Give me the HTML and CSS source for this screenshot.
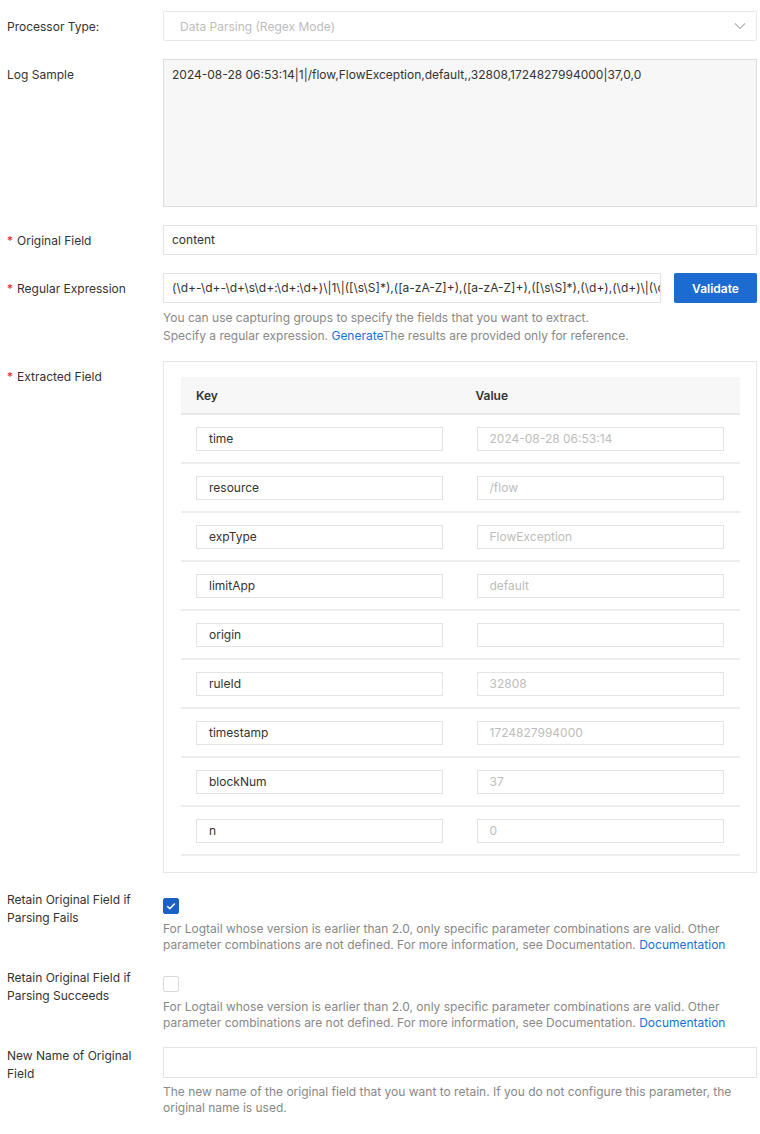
FILE: index.html
```html
<!DOCTYPE html>
<html>
<head>
<meta charset="utf-8">
<link rel="stylesheet" href="styles.css">
</head>
<body>
<div class="form">
  <div class="row">
    <div class="label">Processor Type:</div>
    <div class="control">
      <div class="select">
        <span>Data Parsing (Regex Mode)</span>
        <svg class="chev" width="12" height="8" viewBox="0 0 12 8"><path d="M1 1.5 L6 6.5 L11 1.5" fill="none" stroke="#b5b5b5" stroke-width="1.2"/></svg>
      </div>
    </div>
  </div>

  <div class="row">
    <div class="label">Log Sample</div>
    <div class="control">
      <div class="textarea">2024-08-28 06:53:14|1|/flow,FlowException,default,,32808,1724827994000|37,0,0</div>
    </div>
  </div>

  <div class="row">
    <div class="label"><span class="req">*</span>Original Field</div>
    <div class="control">
      <div class="input">content</div>
    </div>
  </div>

  <div class="row row-regex">
    <div class="label"><span class="req">*</span>Regular Expression</div>
    <div class="control">
      <div class="inline">
        <div class="input regex">(\d+-\d+-\d+\s\d+:\d+:\d+)\|1\|([\s\S]*),([a-zA-Z]+),([a-zA-Z]+),([\s\S]*),(\d+),(\d+)\|(\d</div>
        <button class="btn">Validate</button>
      </div>
      <div class="help tall">You can use capturing groups to specify the fields that you want to extract.<br>Specify a regular expression. <a class="link">Generate</a>The results are provided only for reference.</div>
    </div>
  </div>

  <div class="row">
    <div class="label"><span class="req">*</span>Extracted Field</div>
    <div class="control">
      <div class="panel">
        <table class="tbl">
          <thead>
            <tr><th>Key</th><th>Value</th></tr>
          </thead>
          <tbody>
            <tr><td><div class="cell key">time</div></td><td><div class="cell val">2024-08-28 06:53:14</div></td></tr>
            <tr><td><div class="cell key">resource</div></td><td><div class="cell val">/flow</div></td></tr>
            <tr><td><div class="cell key">expType</div></td><td><div class="cell val">FlowException</div></td></tr>
            <tr><td><div class="cell key">limitApp</div></td><td><div class="cell val">default</div></td></tr>
            <tr><td><div class="cell key">origin</div></td><td><div class="cell val"></div></td></tr>
            <tr><td><div class="cell key">ruleId</div></td><td><div class="cell val">32808</div></td></tr>
            <tr><td><div class="cell key">timestamp</div></td><td><div class="cell val">1724827994000</div></td></tr>
            <tr><td><div class="cell key">blockNum</div></td><td><div class="cell val">37</div></td></tr>
            <tr><td><div class="cell key">n</div></td><td><div class="cell val">0</div></td></tr>
          </tbody>
        </table>
      </div>
    </div>
  </div>

  <div class="row row-check">
    <div class="label multi">Retain Original Field if<br>Parsing Fails</div>
    <div class="control">
      <div class="checkwrap"><span class="checkbox checked"><svg width="10" height="8" viewBox="0 0 10 8"><path d="M1.2 4.2 L3.8 6.6 L8.8 1.4" fill="none" stroke="#fff" stroke-width="1.5"/></svg></span></div>
      <div class="help short">For Logtail whose version is earlier than 2.0, only specific parameter combinations are valid. Other<br>parameter combinations are not defined. For more information, see Documentation. <a class="link">Documentation</a></div>
    </div>
  </div>

  <div class="row row-check">
    <div class="label multi">Retain Original Field if<br>Parsing Succeeds</div>
    <div class="control">
      <div class="checkwrap"><span class="checkbox"></span></div>
      <div class="help short">For Logtail whose version is earlier than 2.0, only specific parameter combinations are valid. Other<br>parameter combinations are not defined. For more information, see Documentation. <a class="link">Documentation</a></div>
    </div>
  </div>

  <div class="row row-check">
    <div class="label multi">New Name of Original<br>Field</div>
    <div class="control">
      <div class="input empty"></div>
      <div class="help short newname">The new name of the original field that you want to retain. If you do not configure this parameter, the<br>original name is used.</div>
    </div>
  </div>
</div>
</body>
</html>
```

FILE: styles.css
```css
* { box-sizing: border-box; }
html, body { margin: 0; padding: 0; background: #fff; }
body {
  font-family: Inter, "Liberation Sans", Arial, sans-serif;
  font-size: 12px;
  color: #333;
}
.form { padding: 11px 3px 0 7px; }
.row {
  display: grid;
  grid-template-columns: 156px 594px;
  margin-bottom: 18px;
}
.row-regex { margin-bottom: 16px; }
.label {
  padding-top: 7px;
  line-height: 18px;
  color: #333;
}
.label.multi { padding-top: 0; }
.req { color: #e0202a; margin-right: 4px; }
.select {
  height: 30px;
  border: 1px solid #e8e8e8;
  border-radius: 2px;
  display: flex;
  align-items: center;
  justify-content: space-between;
  padding: 0 10px 0 16px;
  color: #bdbdbd;
}
.textarea {
  height: 148px;
  border: 1px solid #dcdcdc;
  background: #f7f7f7;
  padding: 6px 8px;
  line-height: 18px;
  color: #333;
}
.input {
  height: 30px;
  border: 1px solid #e3e3e3;
  line-height: 28px;
  padding: 0 8px;
  color: #333;
  white-space: nowrap;
  overflow: hidden;
}
.input.empty { height: 31px; }
.inline { display: flex; gap: 13px; }
.regex { flex: 1; min-width: 0; }
.btn {
  width: 83px;
  height: 30px;
  flex: none;
  border: none;
  border-radius: 2px;
  background: #1b6bd0;
  color: #fff;
  font-family: inherit;
  font-size: 12px;
  font-weight: 600;
  padding: 0;
}
.help { color: #888; }
.help.tall { margin-top: 6px; line-height: 18px; }
.help.short { line-height: 15.5px; }
.help.newname { margin-top: 6px; }
.link { color: #1a6fd6; }
.panel {
  border: 1px solid #e6e6e6;
  padding: 15px 16px 16px 17px;
}
.tbl {
  width: 100%;
  border-collapse: collapse;
  table-layout: fixed;
}
.tbl th {
  background: #f7f7f7;
  height: 37px;
  text-align: left;
  font-weight: 600;
  color: #333;
  padding: 0 15px;
  border-bottom: 2px solid #e8e8e8;
}
.tbl td {
  padding: 12px 15px 11px;
  border-bottom: 2px solid #ededed;
}
.tbl td + td { padding-left: 16px; }
.cell {
  width: 247px;
  height: 24px;
  border: 1px solid #e3e3e3;
  line-height: 22px;
  padding: 0 12px;
}
.cell.key { color: #333; }
.cell.val { color: #bdbdbd; }
.row-check { margin-bottom: 17px; }
.checkwrap { height: 30px; padding-top: 7px; }
.checkbox {
  display: flex;
  align-items: center;
  justify-content: center;
  width: 16px;
  height: 16px;
  border: 1px solid #d8d8d8;
  border-radius: 2px;
  background: #fff;
}
.checkbox.checked { background: #1b60c4; border-color: #1b60c4; }
```
